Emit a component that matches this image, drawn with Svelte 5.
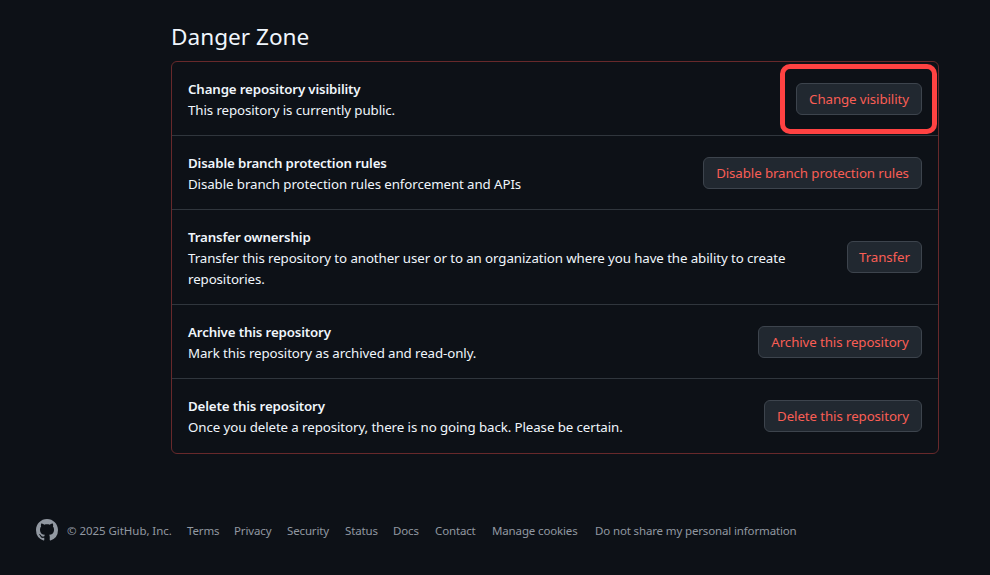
<script>
  const rows = [
    { title: 'Change repository visibility', text: 'This repository is currently public.', action: 'Change visibility', width: 126, highlighted: true },
    { title: 'Disable branch protection rules', text: 'Disable branch protection rules enforcement and APIs', action: 'Disable branch protection rules', width: 219 },
    { title: 'Transfer ownership', text: 'Transfer this repository to another user or to an organization where you have the ability to create repositories.', action: 'Transfer', width: 75 },
    { title: 'Archive this repository', text: 'Mark this repository as archived and read-only.', action: 'Archive this repository', width: 164 },
    { title: 'Delete this repository', text: 'Once you delete a repository, there is no going back. Please be certain.', action: 'Delete this repository', width: 158 }
  ];
  const links = ['Terms', 'Privacy', 'Security', 'Status', 'Docs', 'Contact', 'Manage cookies', 'Do not share my personal information'];
</script>

<div class="page">
  <main>
    <h2>Danger Zone</h2>
    <ul class="box">
      {#each rows as row}
        <li>
          <div class="copy">
            <strong>{row.title}</strong>
            <p>{row.text}</p>
          </div>
          <div class="action">
            <button style="width: {row.width}px">{row.action}</button>
            {#if row.highlighted}<span class="highlight"></span>{/if}
          </div>
        </li>
      {/each}
    </ul>
  </main>
  <footer>
    <svg width="22" height="22" viewBox="0 0 16 16" aria-hidden="true">
      <path fill="currentColor" d="M8 0c4.42 0 8 3.58 8 8a8.013 8.013 0 0 1-5.45 7.59c-.4.08-.55-.17-.55-.38 0-.27.01-1.13.01-2.2 0-.75-.25-1.23-.54-1.48 1.78-.2 3.65-.88 3.65-3.95 0-.88-.31-1.59-.82-2.15.08-.2.36-1.02-.08-2.12 0 0-.67-.22-2.2.82-.64-.18-1.32-.27-2-.27-.68 0-1.36.09-2 .27-1.53-1.03-2.2-.82-2.2-.82-.44 1.1-.16 1.92-.08 2.12-.51.56-.82 1.28-.82 2.15 0 3.06 1.86 3.75 3.64 3.95-.23.2-.44.55-.51 1.07-.46.21-1.61.55-2.33-.66-.15-.24-.6-.83-1.23-.82-.67.01-.27.38.01.53.34.19.73.9.82 1.13.16.45.68 1.31 2.69.94 0 .67.01 1.3.01 1.49 0 .21-.15.45-.55.38A7.995 7.995 0 0 1 0 8c0-4.42 3.58-8 8-8Z" />
    </svg>
    <span class="copyright">© 2025 GitHub, Inc.</span>
    <nav>
      {#each links as link}<a href="#top">{link}</a>{/each}
    </nav>
  </footer>
</div>

<style>
  :global(body) { background: #0d1117; }
  .page {
    box-sizing: border-box;
    height: 575px;
    padding-top: 19px;
    overflow: hidden;
    background: #0d1117;
    color: #f0f6fc;
    font: 13.3px/21px "Noto Sans", "Open Sans", sans-serif;
  }
  main { width: 768px; margin-left: 171px; }
  h2 { margin: 0 0 6px; font-size: 22.6px; line-height: 36px; font-weight: 400; }
  .box {
    margin: 0;
    padding: 0 0 1px;
    list-style: none;
    border: 1px solid #67292b;
    border-radius: 6px;
  }
  li {
    display: flex;
    align-items: center;
    justify-content: space-between;
    padding: 16px 16px 15px;
  }
  li + li { border-top: 1px solid #30363d; }
  .copy { width: 610px; margin: 1px 0 -1px; }
  strong { display: block; font-weight: 600; letter-spacing: -0.15px; }
  p { margin: 0; letter-spacing: -0.09px; }
  .action { position: relative; display: flex; }
  li:nth-child(3) .action { margin-bottom: 1px; }
  button {
    box-sizing: border-box;
    height: 32px;
    padding: 0;
    border: 1px solid #3d444d;
    border-radius: 6px;
    background: #212830;
    color: #fa5e55;
    font: inherit;
    letter-spacing: -0.1px;
    white-space: nowrap;
  }
  .highlight {
    position: absolute;
    inset: -19px -15px -19px -16px;
    border: 5px solid #ff4242;
    border-radius: 10px;
  }
  footer {
    display: flex;
    align-items: center;
    margin: 65px 0 0 36px;
    height: 22px;
    color: #9198a1;
    font-size: 11.5px;
    letter-spacing: -0.14px;
    white-space: nowrap;
  }
  .copyright { width: 120px; margin-left: 9px; letter-spacing: -0.05px; }
  nav { display: grid; grid-template-columns: 47px 53px 58px 48px 42px 57px 103px auto; }
  a { color: inherit; text-decoration: none; }
</style>
